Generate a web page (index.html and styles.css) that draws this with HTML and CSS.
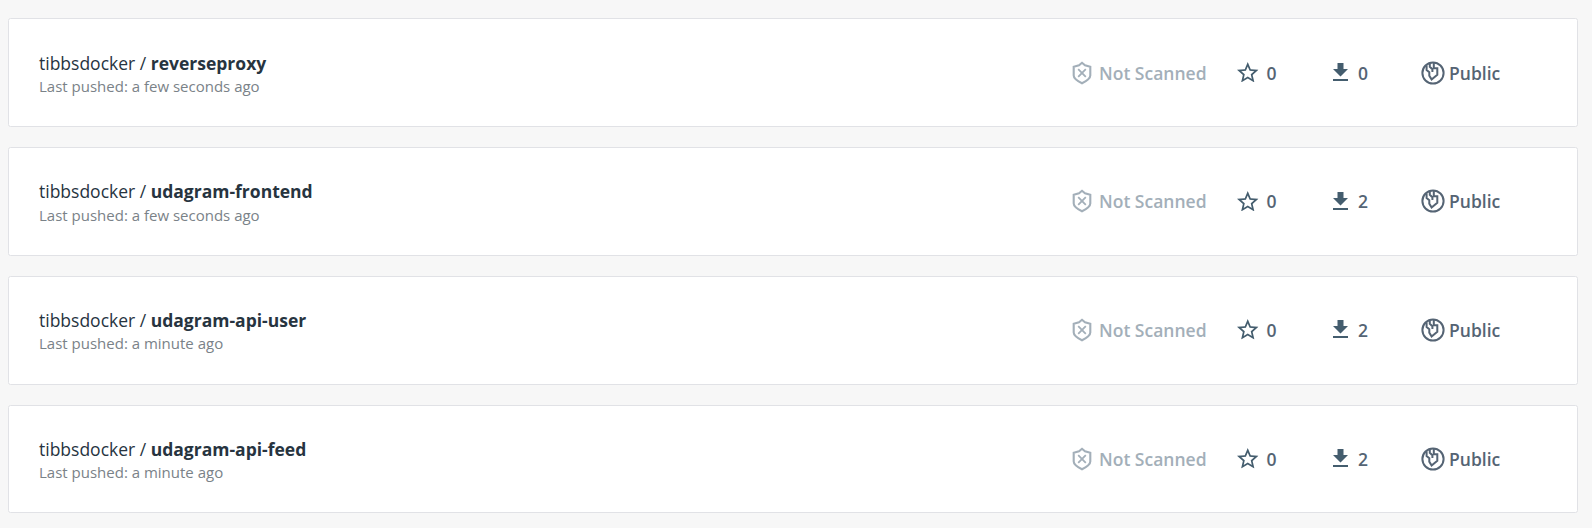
FILE: index.html
```html
<!DOCTYPE html>
<html lang="en">
<head>
<meta charset="utf-8">
<title>Repositories</title>
<link rel="stylesheet" href="styles.css">
</head>
<body>
<svg class="sprite" aria-hidden="true">
  <symbol id="shield" viewBox="0 0 20 24"><path d="M10 1.8L13 4.2L18.3 5.8V14.5C18.3 17.5 14.5 20 10 22.3C5.5 20 1.7 17.5 1.7 14.5V5.8L7 4.2Z" fill="none" stroke="currentColor" stroke-width="2.1"/><path d="M6.2 8.2L13.8 15.8M13.8 8.2L6.2 15.8" stroke="currentColor" stroke-width="1.8"/></symbol>
  <symbol id="star" viewBox="2 2 20 19"><path fill="currentColor" d="M22 9.24l-7.19-.62L12 2 9.19 8.63 2 9.24l5.46 4.73L5.82 21 12 17.27 18.18 21l-1.63-7.03L22 9.24zM12 15.4l-3.76 2.27 1-4.28-3.32-2.88 4.38-.38L12 6.1l1.71 4.04 4.38.38-3.32 2.88 1 4.28L12 15.4z"/></symbol>
  <symbol id="download" viewBox="0 0 15 18"><path fill="currentColor" d="M4.5 0H10.5V6H15L7.5 13.5L0 6H4.5ZM0 15.9H15V18H0Z"/></symbol>
  <symbol id="globe" viewBox="0 0 24 24"><g fill="none" stroke="currentColor" stroke-width="2"><circle cx="12" cy="12" r="10.6"/><path d="M5.6 4.5V9L8.3 11.2V14.7L10.6 18.4L16.3 13.7V7.2H12.8V2M8.8 3V5.8L11.4 8.3V11"/></g></symbol>
</svg>
<main class="repos">
  <article class="repo">
    <div class="info"><div class="name">tibbsdocker / <strong>reverseproxy</strong></div><div class="pushed">Last pushed: a few seconds ago</div></div>
    <div class="stats"><span class="stat scan"><svg class="shield"><use href="#shield"/></svg>Not Scanned</span><span class="stat stars"><svg class="star"><use href="#star"/></svg>0</span><span class="stat pulls"><svg class="download"><use href="#download"/></svg>0</span><span class="stat access"><svg class="globe"><use href="#globe"/></svg>Public</span></div>
  </article>
  <article class="repo">
    <div class="info"><div class="name">tibbsdocker / <strong>udagram-frontend</strong></div><div class="pushed">Last pushed: a few seconds ago</div></div>
    <div class="stats"><span class="stat scan"><svg class="shield"><use href="#shield"/></svg>Not Scanned</span><span class="stat stars"><svg class="star"><use href="#star"/></svg>0</span><span class="stat pulls"><svg class="download"><use href="#download"/></svg>2</span><span class="stat access"><svg class="globe"><use href="#globe"/></svg>Public</span></div>
  </article>
  <article class="repo">
    <div class="info"><div class="name">tibbsdocker / <strong>udagram-api-user</strong></div><div class="pushed">Last pushed: a minute ago</div></div>
    <div class="stats"><span class="stat scan"><svg class="shield"><use href="#shield"/></svg>Not Scanned</span><span class="stat stars"><svg class="star"><use href="#star"/></svg>0</span><span class="stat pulls"><svg class="download"><use href="#download"/></svg>2</span><span class="stat access"><svg class="globe"><use href="#globe"/></svg>Public</span></div>
  </article>
  <article class="repo">
    <div class="info"><div class="name">tibbsdocker / <strong>udagram-api-feed</strong></div><div class="pushed">Last pushed: a minute ago</div></div>
    <div class="stats"><span class="stat scan"><svg class="shield"><use href="#shield"/></svg>Not Scanned</span><span class="stat stars"><svg class="star"><use href="#star"/></svg>0</span><span class="stat pulls"><svg class="download"><use href="#download"/></svg>2</span><span class="stat access"><svg class="globe"><use href="#globe"/></svg>Public</span></div>
  </article>
</main>
</body>
</html>
```
FILE: styles.css
```css
* { box-sizing: border-box; }
body {
  margin: 0;
  background: #f7f7f7;
  font-family: "Open Sans", sans-serif;
  font-size: 17.5px;
}
.sprite { display: none; }
.repos {
  display: flex;
  flex-direction: column;
  gap: 20px;
  padding: 18.3px 14px 0 8px;
}
.repo {
  display: flex;
  justify-content: space-between;
  align-items: center;
  height: 108.75px;
  padding: 0 28px 0 30px;
  background: #fff;
  border: 1px solid #e1e2e6;
  border-radius: 2.5px;
}
.info { padding-top: 3.85px; }
.name { color: #27343f; line-height: 24px; }
.name strong { font-weight: 700; }
.pushed { margin-top: 0.25px; color: #7a8288; font-size: 15px; line-height: 23.6px; }
.stats {
  display: grid;
  grid-template-columns: 165px 96px 87.5px 128.5px;
  padding-bottom: 0.2px;
}
.stat {
  display: flex;
  align-items: center;
  color: #556474;
  font-weight: 600;
  line-height: 24px;
}
.stat svg { flex: none; }
.scan { color: #a3afb9; }
.shield { width: 20px; height: 24px; margin-right: 7px; }
.star { width: 21.5px; height: 20.5px; margin: 0 8px 1px 0; color: #445d6e; }
.download { width: 15px; height: 18px; margin: 0 10px 1.4px 0; color: #445d6e; }
.globe { width: 24px; height: 24px; margin-right: 4.5px; }
```
